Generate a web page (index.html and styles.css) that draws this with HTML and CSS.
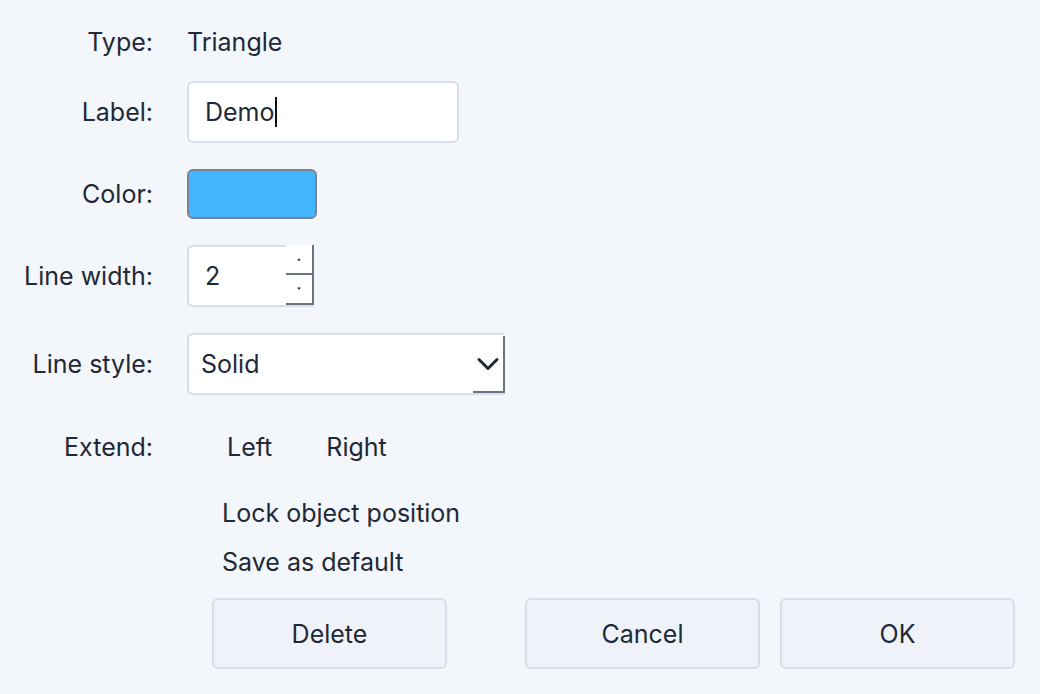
FILE: index.html
```html
<!DOCTYPE html>
<html lang="en">
<head>
<meta charset="utf-8">
<title>Triangle properties</title>
<link rel="stylesheet" href="styles.css">
</head>
<body>
<div class="dialog">
  <div class="form">
    <div class="lbl">Type:</div>
    <div class="val">Triangle</div>

    <div class="lbl">Label:</div>
    <div class="val"><div class="textbox"><span>Demo</span><span class="caret"></span></div></div>

    <div class="lbl">Color:</div>
    <div class="val"><div class="swatch"></div></div>

    <div class="lbl">Line width:</div>
    <div class="val">
      <div class="spinbox">
        <span class="spin-text">2</span>
        <div class="spin">
          <div class="spin-btn"><svg width="6" height="4" viewBox="0 0 6 4"><path d="M1 3.5 L3 1.2 L5 3.5 Z" fill="#1f2937"/></svg></div>
          <div class="spin-btn"><svg width="6" height="4" viewBox="0 0 6 4"><path d="M1 0.5 L3 2.8 L5 0.5 Z" fill="#1f2937"/></svg></div>
        </div>
      </div>
    </div>

    <div class="lbl">Line style:</div>
    <div class="val">
      <div class="select">
        <span class="select-text">Solid</span>
        <div class="select-btn"><svg width="24" height="16" viewBox="0 0 24 16"><path d="M3 3.5 L12 12.5 L21 3.5" fill="none" stroke="#1f2937" stroke-width="3" stroke-linecap="round" stroke-linejoin="round"/></svg></div>
      </div>
    </div>

    <div class="lbl">Extend:</div>
    <div class="val checks">
      <label class="check"><span class="box"></span><span>Left</span></label>
      <label class="check right"><span class="box"></span><span>Right</span></label>
    </div>

    <div class="lbl"></div>
    <div class="val"><label class="check lock"><span class="box"></span><span>Lock object position</span></label></div>

    <div class="lbl"></div>
    <div class="val"><label class="check lock"><span class="box"></span><span>Save as default</span></label></div>
  </div>

  <div class="buttons">
    <button class="btn">Delete</button>
    <div class="btn-group">
      <button class="btn">Cancel</button>
      <button class="btn">OK</button>
    </div>
  </div>
</div>
</body>
</html>
```

FILE: styles.css
```css
* { box-sizing: border-box; }
html, body {
  margin: 0;
  padding: 0;
  background: #f3f6fa;
}
body {
  font-family: Inter, "Noto Sans", "Liberation Sans", sans-serif;
  font-size: 25px;
  color: #1f2937;
  width: 1040px;
  height: 694px;
  overflow: hidden;
}
.dialog {
  padding-top: 20px;
}
.form {
  display: grid;
  grid-template-columns: 153px 1fr;
  column-gap: 34px;
  grid-template-rows: 44px 96px 68px 96px 80px 86px 46px 52px;
  align-items: center;
}
.lbl {
  text-align: right;
}
.val {
  display: flex;
  align-items: center;
}
.textbox {
  width: 272px;
  height: 62px;
  background: #fff;
  border: 2px solid #d9dfe9;
  border-radius: 6px;
  display: flex;
  align-items: center;
  padding-left: 16px;
}
.caret {
  display: inline-block;
  width: 2px;
  height: 30px;
  background: #111;
}
.swatch {
  width: 130px;
  height: 50px;
  background: #43b5fe;
  border: 2px solid #7a8494;
  border-radius: 6px;
}
.spinbox {
  width: 127px;
  height: 62px;
  background: #fff;
  border: 2px solid #d9dfe9;
  border-right: none;
  border-radius: 6px 0 0 6px;
  display: flex;
  align-items: stretch;
  padding-left: 16px;
}
.spin-text {
  flex: 1;
  display: flex;
  align-items: center;
}
.spin {
  width: 28px;
  display: flex;
  flex-direction: column;
  margin-top: -2px;
}
.spin-btn {
  flex: 1;
  display: flex;
  align-items: center;
  justify-content: center;
  border-right: 2px solid #6b7280;
  border-bottom: 2px solid #6b7280;
  background: #fff;
}
.select {
  width: 318px;
  height: 62px;
  background: #fff;
  border: 2px solid #d9dfe9;
  border-right: none;
  border-radius: 6px 0 0 6px;
  display: flex;
  align-items: stretch;
  padding-left: 12px;
}
.select-text {
  flex: 1;
  display: flex;
  align-items: center;
}
.select-btn {
  width: 32px;
  display: flex;
  align-items: center;
  justify-content: center;
  border-right: 2px solid #6b7280;
  border-bottom: 2px solid #6b7280;
  margin-top: 1px;
}
.checks {
  gap: 16px;
}
.check {
  display: flex;
  align-items: center;
  gap: 12px;
}
.check.right {
  gap: 10px;
}
.check.lock {
  gap: 7px;
}
.box {
  width: 28px;
  height: 28px;
  border-radius: 50%;
  background: #f3f6fa;
  border: 1px solid #f0f3f8;
}
.buttons {
  display: flex;
  justify-content: space-between;
  padding: 0 25px 0 212px;
  margin-top: 10px;
}
.btn-group {
  display: flex;
  gap: 20px;
}
.btn {
  width: 235px;
  height: 71px;
  font-family: inherit;
  font-size: 25px;
  color: #1f2937;
  background: #eff2f8;
  border: 2px solid #d8dee9;
  border-radius: 6px;
  padding: 0;
}
```
